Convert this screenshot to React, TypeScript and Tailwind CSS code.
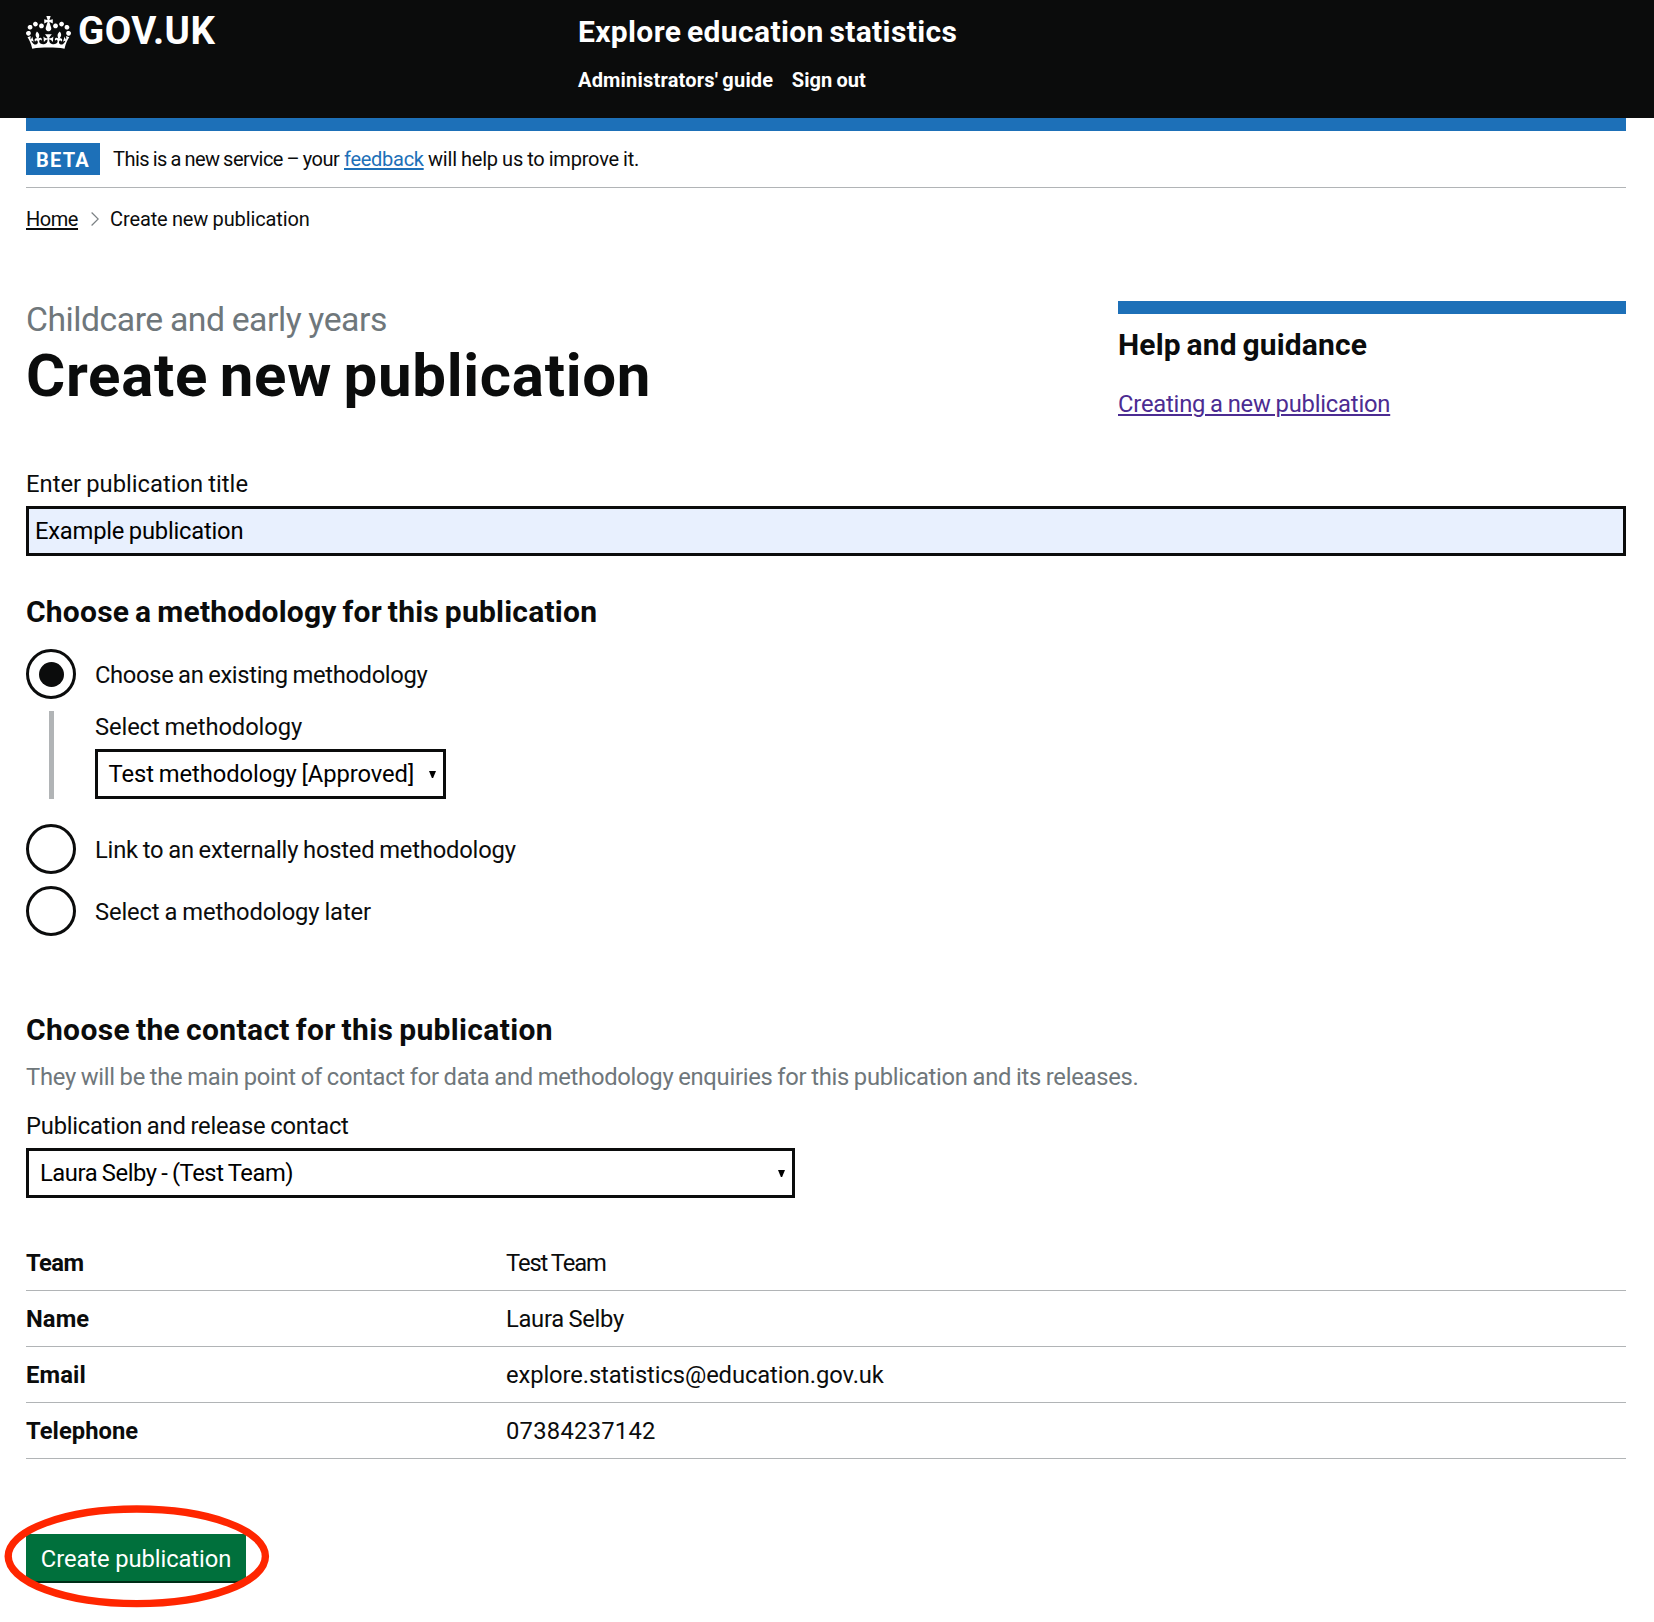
import type { ReactNode } from "react";

const CROWN =
  "M25 30.2c3.5 1.5 7.7-.2 9.1-3.7 1.5-3.6-.2-7.8-3.9-9.2-3.6-1.4-7.6.3-9.1 3.9-1.4 3.5.3 7.5 3.9 9zM9 39.5c3.6 1.5 7.8-.2 9.2-3.7 1.5-3.6-.2-7.8-3.9-9.1-3.6-1.5-7.6.2-9.1 3.8-1.4 3.5.3 7.5 3.8 9zM4.4 57.2c3.5 1.5 7.7-.2 9.1-3.8 1.5-3.6-.2-7.7-3.9-9.1-3.5-1.5-7.6.3-9.1 3.8-1.4 3.5.3 7.6 3.9 9.1zm38.3-21.4c3.5 1.5 7.7-.2 9.1-3.8 1.5-3.6-.2-7.7-3.9-9.1-3.6-1.5-7.6.3-9.1 3.8-1.3 3.6.4 7.7 3.9 9.1zm64.4-5.6c-3.6 1.5-7.8-.2-9.1-3.7-1.5-3.6.2-7.8 3.8-9.2 3.6-1.4 7.7.3 9.2 3.9 1.3 3.5-.4 7.5-3.9 9zm15.9 9.3c-3.6 1.5-7.7-.2-9.1-3.7-1.5-3.6.2-7.8 3.7-9.1 3.6-1.5 7.7.2 9.2 3.8 1.5 3.5-.3 7.5-3.8 9zm4.7 17.7c-3.6 1.5-7.8-.2-9.2-3.8-1.5-3.6.2-7.7 3.9-9.1 3.6-1.5 7.7.3 9.2 3.8 1.3 3.5-.4 7.6-3.9 9.1zM89.3 35.8c-3.6 1.5-7.8-.2-9.2-3.8-1.4-3.6.2-7.7 3.9-9.1 3.6-1.5 7.7.3 9.2 3.8 1.4 3.6-.3 7.7-3.9 9.1zM69.7 17.7l8.9 4.7V9.3l-8.9 2.8c-.2-.3-.5-.6-.9-.9L72.4 0H59.6l3.5 11.2c-.3.3-.6.5-.9.9l-8.8-2.8v13.1l8.8-4.7c.3.3.6.7.9.9l-5 15.4v.1c-.2.8-.4 1.6-.4 2.4 0 4.1 3.1 7.5 7 8.1h.2c.3 0 .7.1 1 .1.4 0 .7 0 1-.1h.2c4-.6 7.1-4.1 7.1-8.1 0-.8-.1-1.7-.4-2.4V34l-5.1-15.4c.4-.2.7-.6 1-.9zM66 92.8c16.9 0 32.8 1.1 47.1 3.2 4-16.9 8.9-26.7 14-33.5l-9.6-3.4c1 4.9 1.1 7.2 0 10.2-1.5-1.4-3-4.3-4.2-8.7L108.6 76c2.8-2 5-3.2 7.5-3.3-4.4 9.4-10 11.9-13.6 11.2-4.3-.8-6.3-4.6-5.6-7.9 1-4.7 5.7-5.9 8-.5 4.3-8.7-3-11.4-7.6-8.8 7.1-7.2 7.9-13.5 2.1-21.1-8 6.1-8.1 12.3-4.5 20.8-4.7-5.4-12.1-2.5-9.5 6.2 3.4-5.2 7.9-2 7.2 3.1-.6 4.3-6.4 7.8-13.5 7.2-10.3-.9-10.9-8-11.2-13.8 2.5-.5 7.1 1.8 11 7.3L80.2 60c-4.1 4.4-8 5.3-12.3 5.4 1.4-4.4 8-11.6 8-11.6H55.5s6.4 7.2 7.9 11.6c-4.2-.1-8-1-12.3-5.4l1.4 16.4c3.9-5.5 8.5-7.7 10.9-7.3-.3 5.8-.9 12.8-11.1 13.8-7.2.6-12.9-2.9-13.5-7.2-.7-5 3.8-8.3 7.1-3.1 2.7-8.7-4.6-11.6-9.4-6.2 3.7-8.5 3.6-14.7-4.6-20.8-5.8 7.6-5 13.9 2.2 21.1-4.7-2.6-11.9.1-7.7 8.8 2.3-5.5 7.1-4.2 8.1.5.7 3.3-1.3 7.1-5.7 7.9-3.5.7-9-1.8-13.5-11.2 2.5.1 4.7 1.3 7.5 3.3l-4.7-15.4c-1.2 4.4-2.7 7.2-4.3 8.7-1.1-3-.9-5.3 0-10.2l-9.5 3.4c5 6.9 9.9 16.7 14 33.5 14.8-2.1 30.8-3.2 47.7-3.2z";

const contactRows = [
  { term: "Team", value: "Test Team", termClass: "tracking-[-0.6px]", valueClass: "tracking-[-1.1px] [word-spacing:-0.8px]" },
  { term: "Name", value: "Laura Selby", termClass: "tracking-[0.1px]", valueClass: "tracking-[-0.3px] [word-spacing:-1px]" },
  { term: "Email", value: "explore.statistics@education.gov.uk", termClass: "tracking-[0.15px]", valueClass: "tracking-[-0.1px]" },
  { term: "Telephone", value: "07384237142", termClass: "tracking-[0.05px]", valueClass: "tracking-[0.26px]" },
];

function SubHeading({ className, children }: { className: string; children: ReactNode }) {
  return <h2 className={`text-[30px] leading-[35px] font-bold ${className}`}>{children}</h2>;
}

function Radio({ checked, className, labelClass, children }: { checked?: boolean; className?: string; labelClass: string; children: ReactNode }) {
  return (
    <label className={`flex ${className ?? ""}`}>
      <span className="mr-[19px] flex size-[50px] shrink-0 items-center justify-center rounded-full border-[3px] border-[#0b0c0c]">
        {checked && <span className="size-[25px] rounded-full bg-[#0b0c0c]" />}
      </span>
      <span className={`pt-[11px] ${labelClass}`}>{children}</span>
    </label>
  );
}

function SelectBox({ className, textClass, children }: { className: string; textClass: string; children: ReactNode }) {
  return (
    <div className={`flex h-[50px] justify-between border-[3px] border-[#0b0c0c] pr-[7px] pl-[11px] text-black ${className}`}>
      <span className={`pt-[7px] whitespace-nowrap ${textClass}`}>{children}</span>
      <svg className="mt-[19px] h-[7px] w-[7px]" viewBox="0 0 7 7" fill="#000">
        <path d="M0 0h7L4.1 7H2.9z" />
      </svg>
    </div>
  );
}

export default function App() {
  return (
    <div className="min-h-[1622px] w-[1654px] overflow-hidden bg-white font-['Roboto',sans-serif] text-[23.75px] leading-[30px] text-[#0b0c0c]">
      <header className="flex h-[118px] bg-[#0b0c0c] px-[26px] font-bold text-white">
        <div className="flex w-[552px] pt-[9px]">
          <svg className="mt-[7px] mr-[7px] h-[33px] w-[45px]" viewBox="0 0 132 97" fill="currentColor">
            <path fillRule="evenodd" d={CROWN} />
          </svg>
          <span className="text-[38.5px] leading-[44px] tracking-[0.5px]">GOV.UK</span>
        </div>
        <div className="pt-[14px]">
          <div className="text-[30px] leading-[35px] tracking-[0.35px] [word-spacing:-2px]">Explore education statistics</div>
          <nav className="mt-[19px] flex gap-[18.5px] text-[20px] leading-[24px]">
            <a className="tracking-[0.2px] [word-spacing:-1px]">Administrators' guide</a>
            <a className="tracking-[0.07px] [word-spacing:-1px]">Sign out</a>
          </nav>
        </div>
      </header>

      <div className="pr-[28px] pl-[26px]">
        <div className="h-[13px] bg-[#1d70b8]" />
        <div className="flex border-b border-[#b1b4b6] py-[12px] text-[20px] leading-[24px]">
          <strong className="mr-[13px] flex h-[32px] w-[74px] justify-center bg-[#1d70b8] pt-[5px] font-bold tracking-[1.2px] text-white">
            BETA
          </strong>
          <div className="flex pt-[4px] whitespace-nowrap">
            <span className="w-[231px] tracking-[-0.53px] [word-spacing:-0.8px]">This is a new service – your</span>
            <a className="w-[84px] tracking-[-0.28px] text-[#1d70b8]">
              <span className="underline decoration-[2px] underline-offset-[2px]">feedback</span>
            </a>
            <span className="tracking-[-0.2px] [word-spacing:-0.6px]">will help us to improve it.</span>
          </div>
        </div>

        <nav className="mt-[19px] flex text-[20px] leading-[24px]">
          <a className="tracking-[-0.45px] underline decoration-[2px] underline-offset-[2px]">Home</a>
          <svg className="mt-[5px] mr-[11px] ml-[13px] h-[14px] w-[8px]" viewBox="0 0 8 14" fill="none" stroke="#7b8184" strokeWidth="1.2">
            <path d="M.6.5 7.2 7 .6 13.5" />
          </svg>
          <span className="tracking-[-0.12px] [word-spacing:-0.5px]">Create new publication</span>
        </nav>

        <div className="mt-[69px] flex h-[169px] justify-between">
          <div>
            <span className="block text-[33.75px] leading-[39px] tracking-[-0.48px] text-[#6f777b] [word-spacing:-0.7px]">
              Childcare and early years
            </span>
            <h1 className="mt-[6px] text-[60px] leading-[61px] font-bold tracking-[0.7px] [word-spacing:-4px]">Create new publication</h1>
          </div>
          <aside className="mt-px w-[508px]">
            <div className="h-[13px] bg-[#1d70b8]" />
            <SubHeading className="mt-[13px] tracking-[0.17px] [word-spacing:-2px]">Help and guidance</SubHeading>
            <a className="mt-[27px] block tracking-[-0.2px] text-[#4c2c92] underline decoration-[2px] underline-offset-[2px] [word-spacing:-0.8px]">
              Creating a new publication
            </a>
          </aside>
        </div>

        <label className="block tracking-[0.01px] [word-spacing:-0.8px]">Enter publication title</label>
        <div className="mt-[7px] h-[50px] border-[3px] border-[#0b0c0c] bg-[#e8f0fe] px-[6px] pt-[7px] tracking-[-0.22px] text-black [word-spacing:-1px]">
          Example publication
        </div>

        <SubHeading className="mt-[38px] tracking-[0.22px] [word-spacing:-1.8px]">Choose a methodology for this publication</SubHeading>
        <div className="mt-[20px]">
          <Radio checked labelClass="tracking-[-0.35px] [word-spacing:-0.8px]">
            Choose an existing methodology
          </Radio>
          <div className="mt-[12px] ml-[23px] flex h-[88px] border-l-[5px] border-[#b1b4b6] pl-[41px]">
            <div>
              <label className="block pt-px tracking-[-0.11px] [word-spacing:-0.8px]">Select methodology</label>
              <SelectBox className="mt-[7px] w-[351px]" textClass="-ml-[0.5px] tracking-[-0.08px] [word-spacing:-0.8px]">
                Test methodology [Approved]
              </SelectBox>
            </div>
          </div>
          <Radio className="mt-[25px]" labelClass="tracking-[-0.2px] [word-spacing:-0.9px]">
            Link to an externally hosted methodology
          </Radio>
          <Radio className="mt-[12px]" labelClass="tracking-[-0.14px] [word-spacing:-0.7px]">
            Select a methodology later
          </Radio>
        </div>

        <SubHeading className="mt-[76px] tracking-[0.34px] [word-spacing:-1.8px]">Choose the contact for this publication</SubHeading>
        <p className="mt-[15px] tracking-[-0.27px] whitespace-nowrap text-[#6f777b] [word-spacing:-0.8px]">
          They will be the main point of contact for data and methodology enquiries for this publication and its releases.
        </p>
        <label className="mt-[19px] block tracking-[-0.22px] [word-spacing:-0.9px]">Publication and release contact</label>
        <SelectBox className="mt-[7px] w-[769px]" textClass="tracking-[-0.42px] [word-spacing:-0.9px]">
          Laura Selby - (Test Team)
        </SelectBox>

        <dl className="mt-[37px]">
          {contactRows.map((row) => (
            <div key={row.term} className="flex h-[56px] border-b border-[#b1b4b6] pt-[13px]">
              <dt className={`w-[480px] font-bold ${row.termClass}`}>{row.term}</dt>
              <dd className={row.valueClass}>{row.value}</dd>
            </div>
          ))}
        </dl>

        <div className="relative mt-[75px] w-[220px]">
          <button className="block h-[47px] w-full bg-[#00703c] pt-[10px] pb-[7px] text-center tracking-[-0.08px] text-white shadow-[0_2px_0_#002d18]">
            Create publication
          </button>
          <svg className="absolute top-[-31px] left-[-24px] h-[106px] w-[270px]" viewBox="0 0 270 106" fill="none">
            <ellipse cx="134.8" cy="53.3" rx="128.6" ry="47.3" stroke="#ff2600" strokeWidth="7.4" />
          </svg>
        </div>
      </div>
    </div>
  );
}
